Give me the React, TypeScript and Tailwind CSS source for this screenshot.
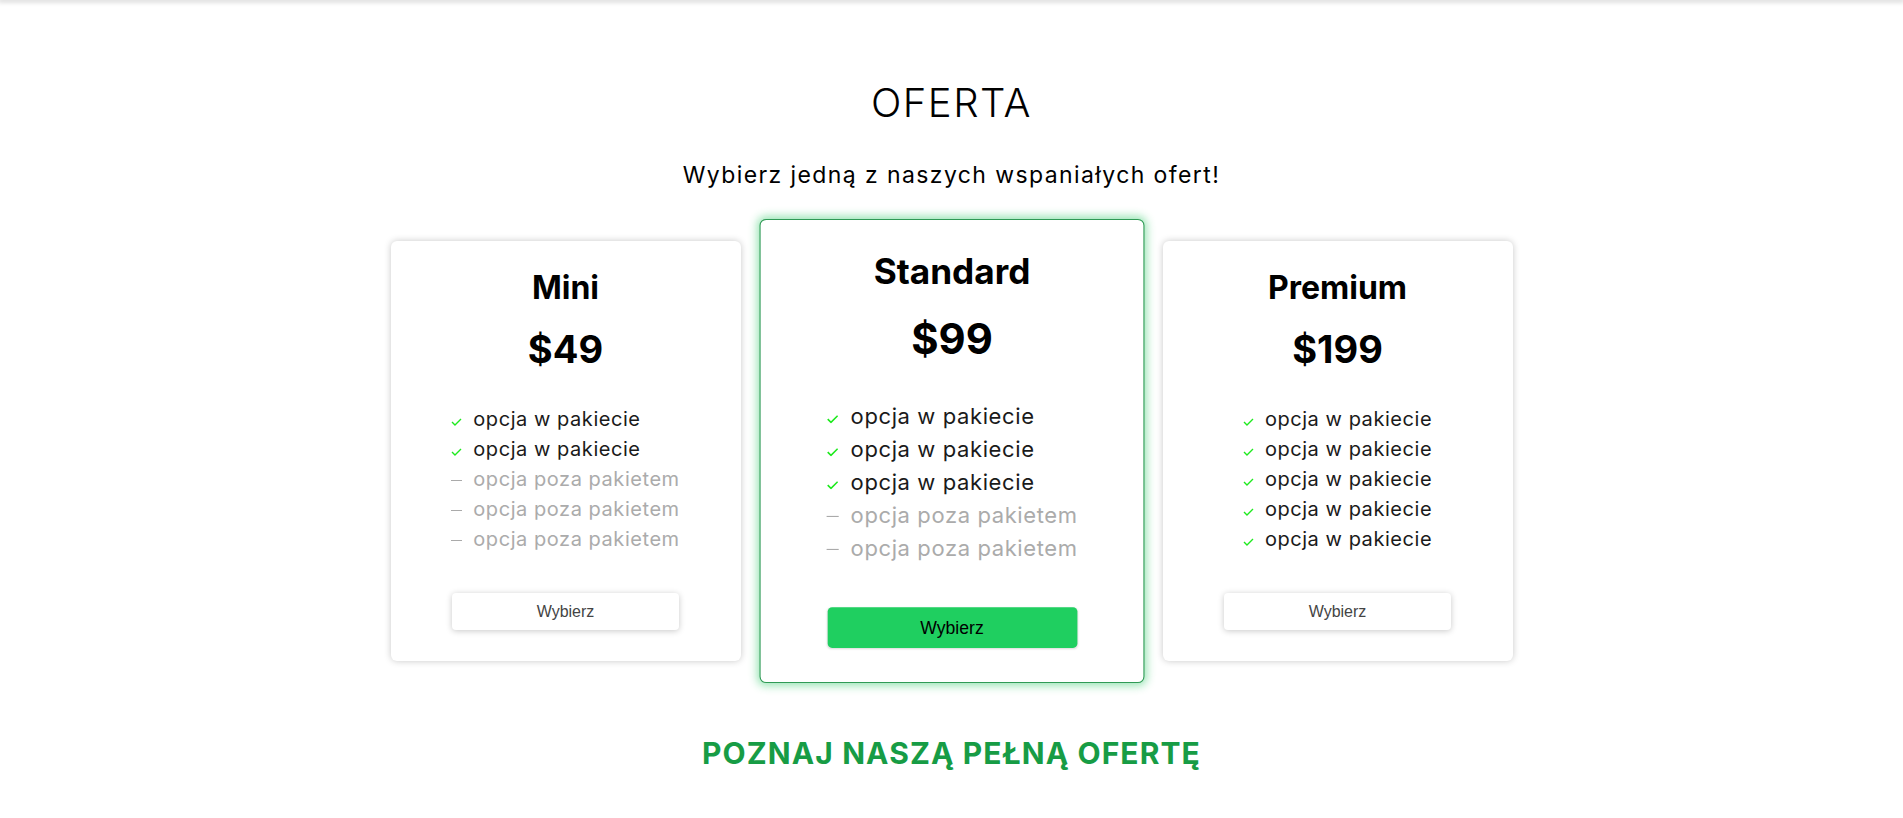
import React from "react";

interface Plan {
  name: string;
  price: string;
  included: number;
  total: number;
  featured?: boolean;
}

const plans: Plan[] = [
  { name: "Mini", price: "$49", included: 2, total: 5 },
  { name: "Standard", price: "$99", included: 3, total: 5, featured: true },
  { name: "Premium", price: "$199", included: 5, total: 5 },
];

function Check() {
  return (
    <svg width="11" height="8" viewBox="0 0 11 8" className="shrink-0">
      <polyline points="1,4 4,7 10,1" fill="none" stroke="#1eea1e" strokeWidth="1.4" />
    </svg>
  );
}

function PlanCard({ plan }: { plan: Plan }) {
  const items = Array.from({ length: plan.total }, (_, i) => i < plan.included);

  return (
    <div
      className={`w-[350px] bg-white rounded-md flex flex-col items-center pt-[28px] pb-[31px] ${
        plan.featured
          ? "scale-110 border border-[#2f9a55] shadow-[0_0_8px_2px_rgba(34,197,94,0.45)]"
          : "shadow-[0_0_7px_rgba(0,0,0,0.22)]"
      }`}
    >
      <h3 className="text-[32px] leading-[38px] font-bold text-black">{plan.name}</h3>
      <div className="mt-[19px] text-[38px] leading-[46px] font-bold text-black">{plan.price}</div>

      <ul className="mt-[32px] text-[20px] leading-[30px] tracking-[0.55px] text-left">
        {items.map((inc, idx) => (
          <li key={idx} className="flex items-center">
            <span className="w-[11px] mr-[11px] flex items-center justify-center pt-[6px]">
              {inc ? <Check /> : <span className="block w-[11px] h-px bg-[#aaaaaa] -mt-[4px]" />}
            </span>
            <span className={inc ? "text-[#1a1a1a]" : "text-[#ababab]"}>
              {inc ? "opcja w pakiecie" : "opcja poza pakietem"}
            </span>
          </li>
        ))}
      </ul>

      <button
        className={`mt-[39px] w-[227px] h-[37px] rounded-[4px] text-[16px] font-['Liberation_Sans',Arial,sans-serif] ${
          plan.featured
            ? "bg-[#1fcf60] text-black shadow-[0_1px_2px_rgba(0,0,0,0.15)]"
            : "bg-white text-[#444444] shadow-[0_1px_6px_rgba(0,0,0,0.22)]"
        }`}
      >
        Wybierz
      </button>
    </div>
  );
}

export default function App() {
  return (
    <div className="min-h-screen bg-white font-['Inter','Noto_Sans',sans-serif]">
      <div className="h-0 shadow-[0_0_5px_2px_rgba(0,0,0,0.18)]" />

      <section className="flex flex-col items-center pt-[79px] pb-[40px]">
        <h1 className="text-[40px] leading-[48px] font-light tracking-[1.5px] text-black">OFERTA</h1>
        <p className="mt-[32px] text-[23px] leading-[33px] tracking-[1.4px] text-black">
          Wybierz jedną z naszych wspaniałych ofert!
        </p>

        <div className="mt-[48px] flex items-center gap-[36px]">
          {plans.map((p) => (
            <PlanCard key={p.name} plan={p} />
          ))}
        </div>

        <a href="#" className="mt-[73px] text-[30px] leading-[36px] font-bold tracking-[1.1px] text-[#179c45]">
          POZNAJ NASZĄ PEŁNĄ OFERTĘ
        </a>
      </section>
    </div>
  );
}
